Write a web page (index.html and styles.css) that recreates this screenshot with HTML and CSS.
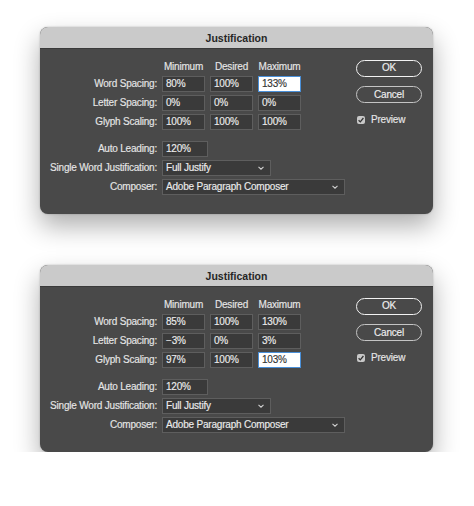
FILE: index.html
```html
<!DOCTYPE html>
<html lang="en">
<head>
    <meta charset="UTF-8">
    <title>Justification</title>
    <link rel="stylesheet" href="styles.css">
</head>
<body>
    <div class="page">
        <!-- first dialog -->
        <div class="dialog">
            <div class="titlebar">Justification</div>
            <div class="body">
                <div class="form">
                    <div class="grid">
                        <span></span>
                        <span class="head">Minimum</span>
                        <span class="head">Desired</span>
                        <span class="head">Maximum</span>

                        <label>Word Spacing:</label>
                        <span class="field">80%</span>
                        <span class="field">100%</span>
                        <span class="field focus">133%</span>

                        <label>Letter Spacing:</label>
                        <span class="field">0%</span>
                        <span class="field">0%</span>
                        <span class="field">0%</span>

                        <label>Glyph Scaling:</label>
                        <span class="field">100%</span>
                        <span class="field">100%</span>
                        <span class="field">100%</span>
                    </div>
                    <div class="rows">
                        <div class="row">
                            <label>Auto Leading:</label>
                            <span class="field w-lead">120%</span>
                        </div>
                        <div class="row">
                            <label>Single Word Justification:</label>
                            <span class="field select w-single">Full Justify
                                <svg class="chev" viewBox="0 0 6 4"><polyline points="0.5,0.8 3,3.2 5.5,0.8"/></svg>
                            </span>
                        </div>
                        <div class="row">
                            <label>Composer:</label>
                            <span class="field select w-comp">Adobe Paragraph Composer
                                <svg class="chev" viewBox="0 0 6 4"><polyline points="0.5,0.8 3,3.2 5.5,0.8"/></svg>
                            </span>
                        </div>
                    </div>
                </div>
                <div class="buttons">
                    <div class="btn primary">OK</div>
                    <div class="btn">Cancel</div>
                    <div class="check">
                        <span class="box"><svg viewBox="0 0 8 8"><polyline points="1.6,4.2 3.3,5.9 6.4,2"/></svg></span>
                        Preview
                    </div>
                </div>
            </div>
        </div>

        <!-- second dialog -->
        <div class="dialog">
            <div class="titlebar">Justification</div>
            <div class="body">
                <div class="form">
                    <div class="grid">
                        <span></span>
                        <span class="head">Minimum</span>
                        <span class="head">Desired</span>
                        <span class="head">Maximum</span>

                        <label>Word Spacing:</label>
                        <span class="field">85%</span>
                        <span class="field">100%</span>
                        <span class="field">130%</span>

                        <label>Letter Spacing:</label>
                        <span class="field">&minus;3%</span>
                        <span class="field">0%</span>
                        <span class="field">3%</span>

                        <label>Glyph Scaling:</label>
                        <span class="field">97%</span>
                        <span class="field">100%</span>
                        <span class="field focus">103%</span>
                    </div>
                    <div class="rows">
                        <div class="row">
                            <label>Auto Leading:</label>
                            <span class="field w-lead">120%</span>
                        </div>
                        <div class="row">
                            <label>Single Word Justification:</label>
                            <span class="field select w-single">Full Justify
                                <svg class="chev" viewBox="0 0 6 4"><polyline points="0.5,0.8 3,3.2 5.5,0.8"/></svg>
                            </span>
                        </div>
                        <div class="row">
                            <label>Composer:</label>
                            <span class="field select w-comp">Adobe Paragraph Composer
                                <svg class="chev" viewBox="0 0 6 4"><polyline points="0.5,0.8 3,3.2 5.5,0.8"/></svg>
                            </span>
                        </div>
                    </div>
                </div>
                <div class="buttons">
                    <div class="btn primary">OK</div>
                    <div class="btn">Cancel</div>
                    <div class="check">
                        <span class="box"><svg viewBox="0 0 8 8"><polyline points="1.6,4.2 3.3,5.9 6.4,2"/></svg></span>
                        Preview
                    </div>
                </div>
            </div>
        </div>
    </div>
</body>
</html>
```

FILE: styles.css
```css
*{
    margin: 0;
    padding: 0;
    box-sizing: border-box;
}
body{
    background-color: #fff;
    font-family: "Liberation Sans", Arial, sans-serif;
    font-size: 10px;
    letter-spacing: -0.2px;
    color: #e6e6e6;
    -webkit-text-stroke: 0.15px;
}
.page{
    display: flex;
    flex-direction: column;
    gap: 51px;
    padding: 27px 0 0 40px;
}
.dialog{
    width: 393px;
    height: 187px;
    background-color: #494949;
    border-radius: 8px;
    box-shadow: 0 12px 26px rgba(0,0,0,0.32), 0 0 2px rgba(0,0,0,0.25);
    overflow: hidden;
}
.titlebar{
    height: 22px;
    line-height: 22px;
    background-color: #cacaca;
    color: #262626;
    font-weight: bold;
    font-size: 10.5px;
    letter-spacing: 0;
    text-align: center;
    border-bottom: 1px solid #3a3a3a;
    -webkit-text-stroke: 0;
}
.body{
    display: flex;
    justify-content: space-between;
    padding: 11px 11px 0 0;
}
.form{
    padding-top: 1px;
}
.grid{
    display: grid;
    grid-template-columns: 117px 43px 43px 43px;
    grid-template-rows: 12px 16px 16px 16px;
    column-gap: 5px;
    row-gap: 3px;
}
.grid .head{
    text-align: center;
    line-height: 12px;
    margin-bottom: 2px;
}
label{
    text-align: right;
    line-height: 16px;
    white-space: nowrap;
}
.field{
    position: relative;
    display: block;
    height: 16px;
    line-height: 14px;
    padding-left: 3px;
    background-color: #3a3a3a;
    border: 1px solid #5e5e5e;
    color: #ececec;
    white-space: nowrap;
}
.field.focus{
    background-color: #fff;
    border-color: #4a90d9;
    color: #333;
}
.rows{
    display: flex;
    flex-direction: column;
    gap: 3px;
    margin-top: 11px;
}
.row{
    display: flex;
    gap: 5px;
}
.row label{
    width: 117px;
}
.w-lead{
    width: 46px;
}
.w-single{
    width: 109px;
}
.w-comp{
    width: 183px;
}
.chev{
    position: absolute;
    right: 6px;
    top: 5px;
    width: 6px;
    height: 4px;
    fill: none;
    stroke: #d0d0d0;
    stroke-width: 1.1;
}
.buttons{
    display: flex;
    flex-direction: column;
    width: 66px;
}
.btn{
    height: 17px;
    line-height: 15px;
    text-align: center;
    border: 1px solid #c4c4c4;
    border-radius: 9px;
    color: #f0f0f0;
    margin-bottom: 9px;
}
.btn.primary{
    border: 1.5px solid #f2f2f2;
    line-height: 14px;
}
.check{
    display: flex;
    align-items: center;
    gap: 6px;
    padding-left: 1px;
    margin-top: 2px;
    line-height: 12px;
}
.box{
    width: 8px;
    height: 8px;
    border-radius: 2px;
    background-color: #c8c8c8;
}
.box svg{
    display: block;
    width: 8px;
    height: 8px;
    fill: none;
    stroke: #333;
    stroke-width: 1.3;
}
```
